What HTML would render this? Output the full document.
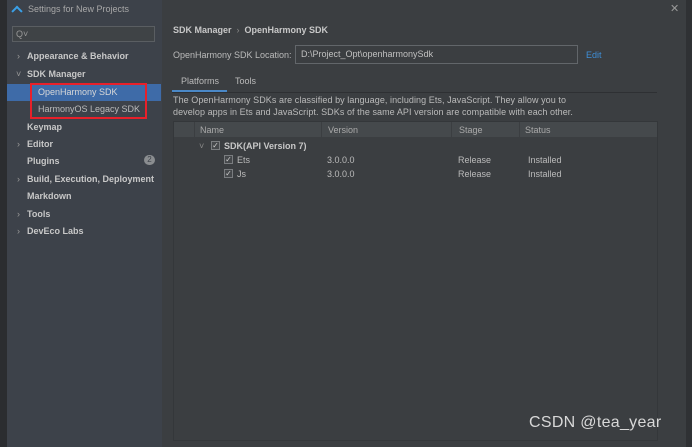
<!DOCTYPE html>
<html><head><style>
*{margin:0;padding:0;box-sizing:border-box}
body{width:692px;height:447px;overflow:hidden;background:#3b3e41;font-family:"Liberation Sans",sans-serif;font-size:9px;color:#bbbbbb;position:relative}
.a{position:absolute;white-space:nowrap}
.b{font-weight:bold;color:#c8c8c8}
.cb{position:absolute;width:9px;height:9px;border:1px solid #7a7d80;background:#45484b;font-size:8px;line-height:7px;text-align:center;color:#ccc}
</style></head><body>
<div class="a" style="left:0;top:0;width:7px;height:447px;background:#2b2d30"></div>
<div class="a" style="left:7px;top:0;width:155px;height:447px;background:#3d424a"></div>
<div class="a" style="left:686px;top:0;width:6px;height:447px;background:#2f3134"></div>
<div class="a" style="left:13px;top:3px;width:8px;height:8px;border-top:2px solid #3aa0e8;border-left:2px solid #3aa0e8;transform:rotate(45deg) translate(3px,3px)"></div>
<div class="a" style="left:28px;top:4px;color:#a8a8a8">Settings for New Projects</div>
<div class="a" style="left:670px;top:2px;color:#999;font-size:11px">✕</div>
<div class="a" style="left:12px;top:26px;width:143px;height:16px;border:1px solid #5a5e62;background:#3f4346;color:#999;font-size:9px;padding-left:3px;line-height:14px">Q˅</div>
<div class="a" style="left:7px;top:84px;width:154px;height:17px;background:#3e6ba8"></div>
<div class="a" style="left:30px;top:83px;width:117px;height:36px;border:2px solid #e8202a"></div>
<div class="a" style="left:17px;top:51px;color:#999">›</div><div class="a b" style="left:27px;top:51px">Appearance &amp; Behavior</div>
<div class="a" style="left:16px;top:69px;color:#999">˅</div><div class="a b" style="left:27px;top:69px">SDK Manager</div>
<div class="a" style="left:38px;top:87px;color:#d8d8d8">OpenHarmony SDK</div>
<div class="a" style="left:38px;top:104px">HarmonyOS Legacy SDK</div>
<div class="a b" style="left:27px;top:122px">Keymap</div>
<div class="a" style="left:17px;top:139px;color:#999">›</div><div class="a b" style="left:27px;top:139px">Editor</div>
<div class="a b" style="left:27px;top:156px">Plugins</div>
<div class="a" style="left:144px;top:155px;width:11px;height:10px;border-radius:5px;background:#8a8d90;color:#3d424a;font-size:8px;text-align:center;line-height:10px">2</div>
<div class="a" style="left:17px;top:174px;color:#999">›</div><div class="a b" style="left:27px;top:174px">Build, Execution, Deployment</div>
<div class="a b" style="left:27px;top:191px">Markdown</div>
<div class="a" style="left:17px;top:209px;color:#999">›</div><div class="a b" style="left:27px;top:209px">Tools</div>
<div class="a" style="left:17px;top:226px;color:#999">›</div><div class="a b" style="left:27px;top:226px">DevEco Labs</div>
<div class="a b" style="left:173px;top:25px">SDK Manager <span style="color:#888;font-weight:normal">&nbsp;›&nbsp;</span> OpenHarmony SDK</div>
<div class="a" style="left:173px;top:50px">OpenHarmony SDK Location:</div>
<div class="a" style="left:295px;top:45px;width:283px;height:19px;border:1px solid #62666a;padding-left:5px;line-height:17px;color:#c0c0c0">D:\Project_Opt\openharmonySdk</div>
<div class="a" style="left:586px;top:50px;color:#3e8fd8">Edit</div>
<div class="a" style="left:181px;top:76px">Platforms</div>
<div class="a" style="left:235px;top:76px">Tools</div>
<div class="a" style="left:172px;top:90px;width:55px;height:3px;background:#4a88c7"></div>
<div class="a" style="left:172px;top:92px;width:485px;height:1px;background:#2e3033"></div>
<div class="a" style="left:173px;top:95px;line-height:11.5px;letter-spacing:0.07px">The OpenHarmony SDKs are classified by language, including Ets, JavaScript. They allow you to<br>develop apps in Ets and JavaScript. SDKs of the same API version are compatible with each other.</div>
<div class="a" style="left:173px;top:121px;width:485px;height:320px;border:1px solid #34373a;background:#3b3e41"></div>
<div class="a" style="left:174px;top:122px;width:483px;height:15px;background:#45494c"></div>
<div class="a" style="left:194px;top:122px;width:1px;height:15px;background:#3b3e41"></div>
<div class="a" style="left:321px;top:122px;width:1px;height:15px;background:#3b3e41"></div>
<div class="a" style="left:451px;top:122px;width:1px;height:15px;background:#3b3e41"></div>
<div class="a" style="left:519px;top:122px;width:1px;height:15px;background:#3b3e41"></div>
<div class="a" style="left:200px;top:125px;color:#aaa">Name</div>
<div class="a" style="left:328px;top:125px;color:#aaa">Version</div>
<div class="a" style="left:459px;top:125px;color:#aaa">Stage</div>
<div class="a" style="left:525px;top:125px;color:#aaa">Status</div>
<div class="a" style="left:199px;top:141px;color:#888">˅</div>
<div class="cb" style="left:211px;top:141px">✓</div>
<div class="a b" style="left:224px;top:141px">SDK(API Version 7)</div>
<div class="cb" style="left:224px;top:155px">✓</div>
<div class="a" style="left:237px;top:155px">Ets</div>
<div class="a" style="left:327px;top:155px">3.0.0.0</div>
<div class="a" style="left:458px;top:155px">Release</div>
<div class="a" style="left:528px;top:155px">Installed</div>
<div class="cb" style="left:224px;top:169px">✓</div>
<div class="a" style="left:237px;top:169px">Js</div>
<div class="a" style="left:327px;top:169px">3.0.0.0</div>
<div class="a" style="left:458px;top:169px">Release</div>
<div class="a" style="left:528px;top:169px">Installed</div>
<div class="a" style="left:529px;top:414px;font-size:16px;color:#d8d8d8;letter-spacing:0.3px">CSDN @tea_year</div>
</body></html>
